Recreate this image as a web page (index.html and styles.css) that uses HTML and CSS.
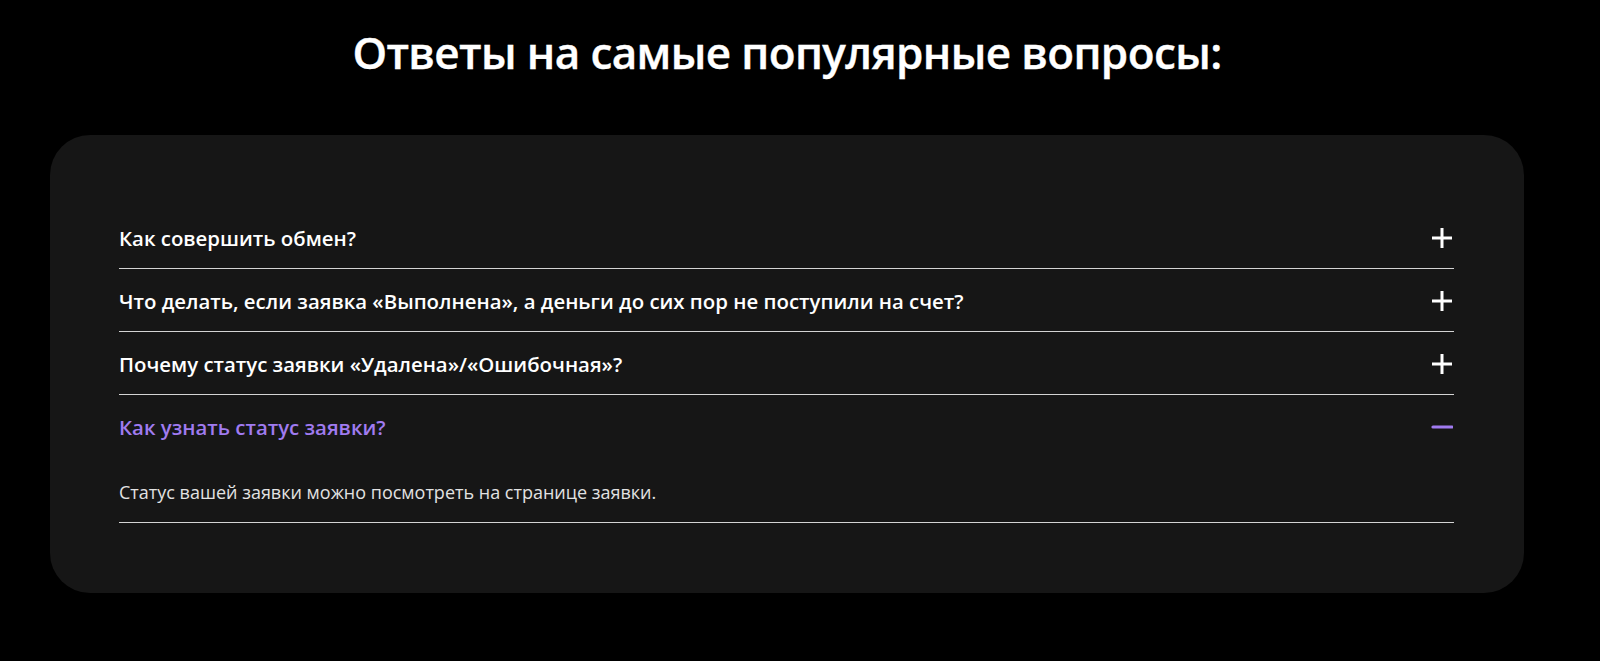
FILE: index.html
```html
<!DOCTYPE html>
<html lang="ru">
<head>
  <meta charset="UTF-8" />
  <meta name="viewport" content="width=device-width, initial-scale=1" />
  <title>FAQ</title>
  <link rel="stylesheet" href="styles.css">
</head>
<body>
  <section class="faq">
    <h1 class="faq-title">Ответы на самые популярные вопросы:</h1>
    <div class="faq-card">
      <div class="faq-item">
        <button class="faq-question" type="button">
          <span>Как совершить обмен?</span>
          <svg class="faq-icon" viewBox="0 0 22 22" aria-hidden="true"><path d="M1 11h20M11 1v20" /></svg>
        </button>
        <div class="faq-answer">Перейдите на главную страницу, выберите направление обмена и заполните заявку.</div>
      </div>
      <div class="faq-item">
        <button class="faq-question" type="button">
          <span>Что делать, если заявка «Выполнена», а деньги до сих пор не поступили на счет?</span>
          <svg class="faq-icon" viewBox="0 0 22 22" aria-hidden="true"><path d="M1 11h20M11 1v20" /></svg>
        </button>
        <div class="faq-answer">Свяжитесь с поддержкой и укажите номер заявки.</div>
      </div>
      <div class="faq-item">
        <button class="faq-question" type="button">
          <span>Почему статус заявки «Удалена»/«Ошибочная»?</span>
          <svg class="faq-icon" viewBox="0 0 22 22" aria-hidden="true"><path d="M1 11h20M11 1v20" /></svg>
        </button>
        <div class="faq-answer">Заявка не была оплачена вовремя или данные были указаны неверно.</div>
      </div>
      <div class="faq-item open">
        <button class="faq-question" type="button">
          <span>Как узнать статус заявки?</span>
          <svg class="faq-icon" viewBox="0 0 22 22" aria-hidden="true"><path d="M1 11h20M11 1v20" /></svg>
        </button>
        <div class="faq-answer">Статус вашей заявки можно посмотреть на странице заявки.</div>
      </div>
    </div>
  </section>

  <script>
    (function() {
      const items = document.querySelectorAll('.faq-item');

      // Toggle one answer at a time
      items.forEach(item => {
        item.querySelector('.faq-question').addEventListener('click', () => {
          const wasOpen = item.classList.contains('open');
          items.forEach(other => other.classList.remove('open'));
          if (!wasOpen) {
            item.classList.add('open');
          }
        });
      });
    })();
  </script>
</body>
</html>
```

FILE: styles.css
```css
body {
  margin: 0;
  background: #000;
  color: #fff;
  font-family: 'Open Sans', 'Noto Sans', sans-serif;
}
.faq {
  width: 1474px;
  margin-left: 50px;
  padding-top: 30px;
}
.faq-title {
  margin: 0 0 61px;
  font-size: 44px;
  line-height: 1;
  font-weight: 600;
  text-align: center;
  letter-spacing: -0.6px;
  -webkit-text-stroke: 0.4px #fff;
}
.faq-card {
  background: #161616;
  border-radius: 40px;
  padding: 71px 70px 70px 69px;
}
.faq-item {
  border-bottom: 1px solid #d4d4d4;
}
.faq-question {
  display: flex;
  align-items: center;
  justify-content: space-between;
  width: 100%;
  padding: 20px 0 18px;
  background: none;
  border: none;
  color: #fff;
  font-family: inherit;
  font-size: 20.4px;
  line-height: 24px;
  font-weight: 600;
  text-align: left;
  cursor: pointer;
}
.faq-icon {
  width: 22px;
  height: 22px;
  flex-shrink: 0;
  margin-right: 1px;
  fill: none;
  stroke: #fff;
  stroke-width: 3;
}
.faq-answer {
  display: none;
  margin-top: 23px;
  padding-bottom: 18px;
  font-size: 18px;
  line-height: 24px;
  color: #e2e2e2;
}
.open .faq-question {
  color: #a07bf0;
}
.open .faq-icon {
  stroke: #a07bf0;
  stroke-width: 3.2;
  stroke-linecap: round;
}
.open .faq-icon path {
  d: path("M2 11h19");
}
.open .faq-answer {
  display: block;
}
```
